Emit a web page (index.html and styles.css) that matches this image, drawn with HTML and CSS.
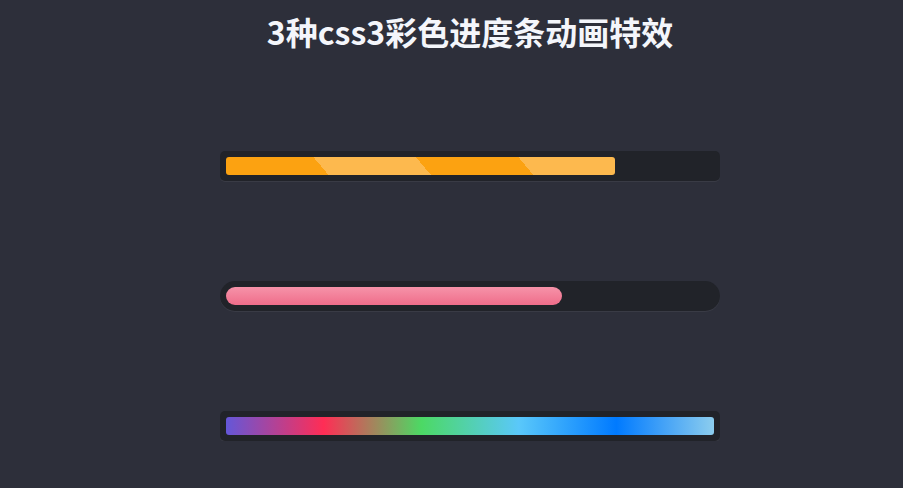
FILE: index.html
```html
<!DOCTYPE html>
<html lang="zh-CN">
<head>
<meta charset="utf-8">
<title>3种css3彩色进度条动画特效</title>
<link rel="stylesheet" href="styles.css">
</head>
<body>
<main class="page">
  <h1 class="title">3种css3彩色进度条动画特效</h1>
  <div class="track track-square">
    <div class="bar bar-stripes" style="width: 79.8%"></div>
  </div>
  <div class="track track-round">
    <div class="bar bar-pink" style="width: 68.8%"></div>
  </div>
  <div class="track track-square">
    <div class="bar bar-rainbow" style="width: 100%"></div>
  </div>
</main>
</body>
</html>
```
FILE: styles.css
```css
html, body {
  margin: 0;
  padding: 0;
  background: #2d2f3a;
}

.page {
  width: 500px;
  margin-left: 220px;
  padding-top: 12px;
  display: flex;
  flex-direction: column;
  gap: 100px;
}

.title {
  margin: 0 0 1px;
  font-family: "Noto Sans CJK SC", "Noto Sans", sans-serif;
  font-weight: 700;
  font-size: 32px;
  line-height: 38px;
  color: #f4f6fb;
  text-align: center;
  white-space: nowrap;
}

.track {
  box-sizing: border-box;
  height: 30px;
  padding: 6px;
  background: #212329;
  box-shadow: 0 1px 0 rgba(255, 255, 255, 0.06);
}

.track-square {
  border-radius: 5px;
}

.track-round {
  border-radius: 15px;
}

.bar {
  height: 18px;
}

.bar-stripes {
  border-radius: 3px;
  background: repeating-linear-gradient(50deg, #fca211 0 78.5px, #fdb94e 78.5px 157px);
}

.bar-pink {
  border-radius: 9px;
  background: linear-gradient(to bottom, #f693a9, #ef6d8a);
}

.bar-rainbow {
  border-radius: 3px;
  background: linear-gradient(to right, #6457d8 0%, #ff2d55 20%, #4cd964 40%, #5ac8fa 60%, #007aff 80%, #8ccdee 100%);
}
```
